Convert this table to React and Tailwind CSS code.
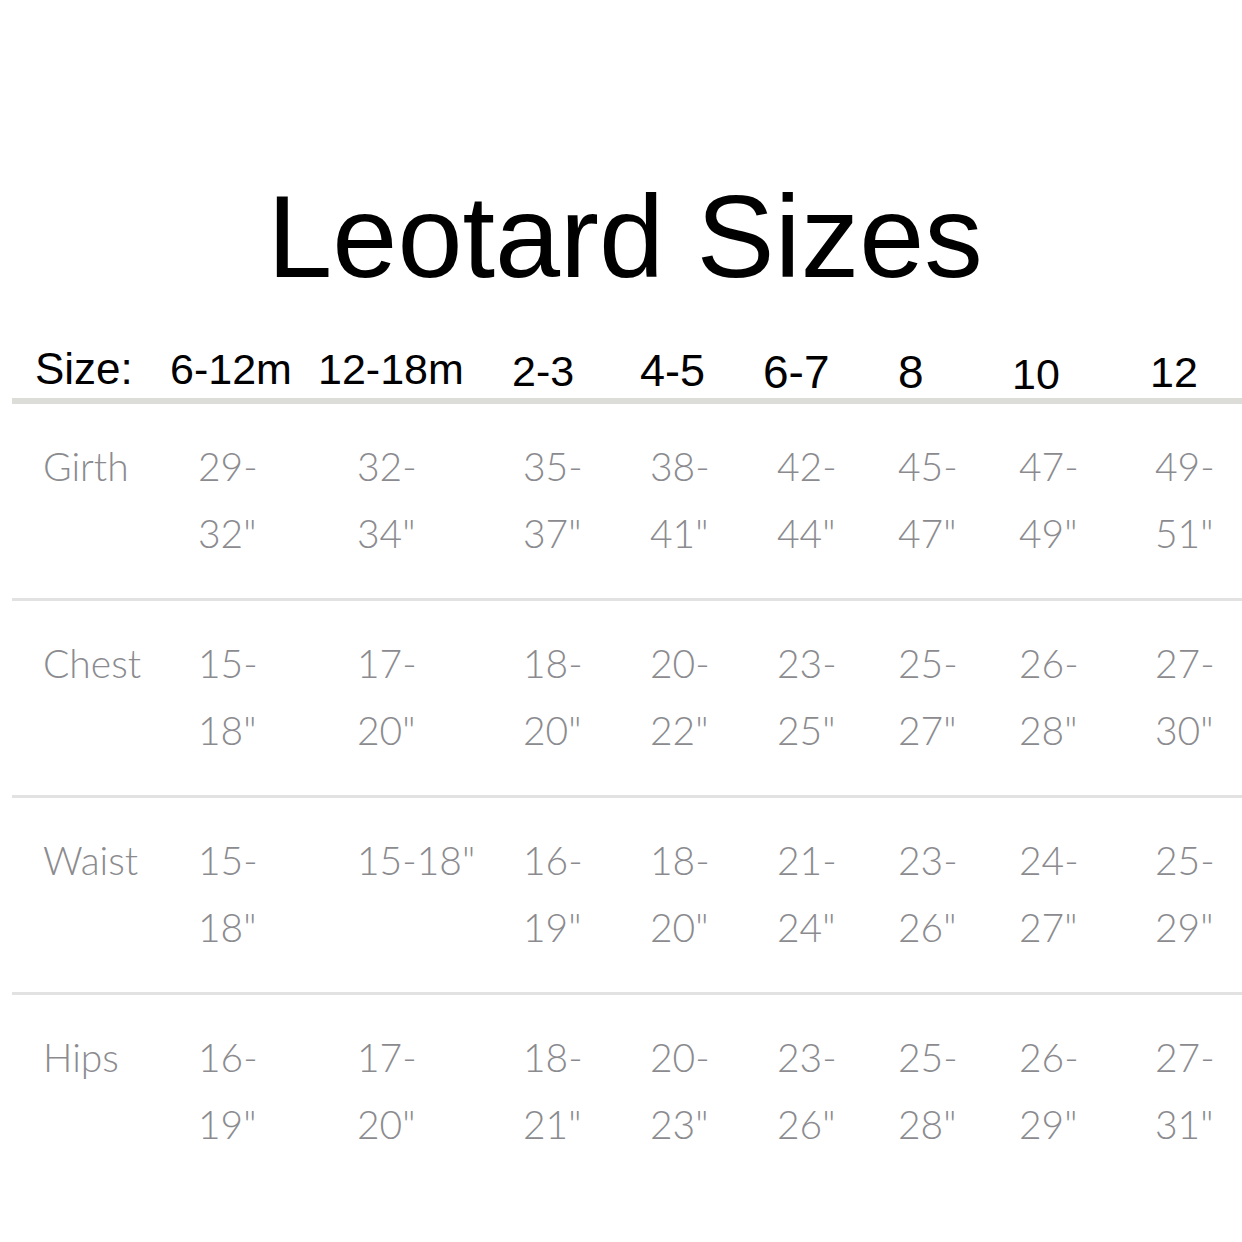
const sizes = [
  { label: '6-12m', w: 'w-[148px]', cls: 'text-[43px]' },
  { label: '12-18m', w: 'w-[194px]', cls: 'text-[43px]' },
  { label: '2-3', w: 'w-[128px]', cls: 'text-[43px] translate-y-[2px]' },
  { label: '4-5', w: 'w-[123px]', cls: 'text-[45px] translate-y-[2px]' },
  { label: '6-7', w: 'w-[135px]', cls: 'text-[46px] translate-y-[4px]' },
  { label: '8', w: 'w-[114px]', cls: 'text-[46px] translate-y-[4px]' },
  { label: '10', w: 'w-[138px]', cls: 'text-[43px] translate-y-[5px]' },
  { label: '12', w: 'w-[60px]', cls: 'text-[43px] translate-y-[3px]' },
]

const colWidths = ['w-[159px]', 'w-[166px]', 'w-[127px]', 'w-[127px]', 'w-[121px]', 'w-[121px]', 'w-[136px]', 'w-[80px]']

const rows = [
  { name: 'Girth', values: [['29-', '32"'], ['32-', '34"'], ['35-', '37"'], ['38-', '41"'], ['42-', '44"'], ['45-', '47"'], ['47-', '49"'], ['49-', '51"']] },
  { name: 'Chest', values: [['15-', '18"'], ['17-', '20"'], ['18-', '20"'], ['20-', '22"'], ['23-', '25"'], ['25-', '27"'], ['26-', '28"'], ['27-', '30"']] },
  { name: 'Waist', values: [['15-', '18"'], ['15-18"'], ['16-', '19"'], ['18-', '20"'], ['21-', '24"'], ['23-', '26"'], ['24-', '27"'], ['25-', '29"']] },
  { name: 'Hips', values: [['16-', '19"'], ['17-', '20"'], ['18-', '21"'], ['20-', '23"'], ['23-', '26"'], ['25-', '28"'], ['26-', '29"'], ['27-', '31"']] },
]

export default function App() {
  return (
    <div className="w-[1242px] h-[1242px] bg-white overflow-hidden">
      {/* Title */}
      <div
        className="pt-[178px] pl-[8px] text-center text-black text-[117px] leading-[117px]"
        style={{ fontFamily: '"Liberation Sans", Arial, sans-serif' }}
      >
        Leotard Sizes
      </div>

      {/* Size header */}
      <div
        className="mt-[50px] flex items-end pl-[35px] text-black leading-none"
        style={{ fontFamily: '"Liberation Sans", Arial, sans-serif' }}
      >
        <div className="w-[135px] text-[44px]">Size:</div>
        {sizes.map((s) => (
          <div key={s.label} className={`${s.w} ${s.cls} whitespace-nowrap`}>
            {s.label}
          </div>
        ))}
      </div>
      <div className="mt-[7px] ml-[12px] h-[6px] bg-[#dcdcd8]" />

      {/* Measurement rows */}
      <div style={{ fontFamily: 'Lato, "Open Sans", sans-serif' }}>
        {rows.map((row, i) => (
          <div key={row.name}>
            <div className="flex pt-[29px] pb-[31px] pl-[43px] text-[39px] leading-[67px] font-light text-[#8b8b8f]">
              <div className="w-[155px]">{row.name}</div>
              {row.values.map((v, j) => (
                <div key={j} className={`${colWidths[j]} flex flex-col whitespace-nowrap`}>
                  {v.map((line, k) => (
                    <span key={k}>{line}</span>
                  ))}
                </div>
              ))}
            </div>
            {i < rows.length - 1 && <div className="ml-[12px] h-[3px] bg-[#e2e2e2]" />}
          </div>
        ))}
      </div>
    </div>
  )
}
